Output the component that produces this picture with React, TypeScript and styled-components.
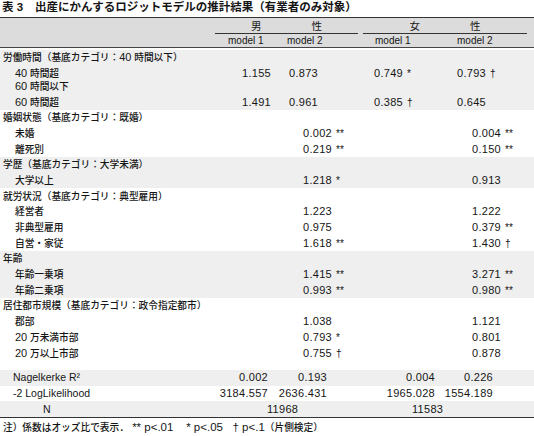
import { FunctionComponent, ReactNode } from "react";
import styled, { createGlobalStyle } from "styled-components";

const GlobalStyle = createGlobalStyle`
    body {
        margin: 0;
        background: #fff;
        color: #151515;
        font-family: "Liberation Sans", "Noto Sans CJK JP", sans-serif;
    }
`;

const COLS = "215px 63px 82px 83px 91px";

interface Mark {
    v: string;
    m?: string;
}

interface Item {
    label: string[];
    m1?: string;
    m2?: Mark;
    f1?: Mark;
    f2?: Mark;
}

interface Section {
    title: string;
    shaded: boolean;
    m2Pad: number;
    f2Pad: number;
    items: Item[];
}

const sections: Section[] = [
    {
        title: "労働時間（基底カテゴリ：40 時間以下）",
        shaded: true,
        m2Pad: 11,
        f2Pad: 14,
        items: [
            { label: ["40 時間超", "60 時間以下"], m1: "1.155", m2: { v: "0.873" }, f1: { v: "0.749", m: "*" }, f2: { v: "0.793", m: "†" } },
            { label: ["60 時間超"], m1: "1.491", m2: { v: "0.961" }, f1: { v: "0.385", m: "†" }, f2: { v: "0.645" } },
        ],
    },
    {
        title: "婚姻状態（基底カテゴリ：既婚）",
        shaded: false,
        m2Pad: 25,
        f2Pad: 29,
        items: [
            { label: ["未婚"], m2: { v: "0.002", m: "**" }, f2: { v: "0.004", m: "**" } },
            { label: ["離死別"], m2: { v: "0.219", m: "**" }, f2: { v: "0.150", m: "**" } },
        ],
    },
    {
        title: "学歴（基底カテゴリ：大学未満）",
        shaded: true,
        m2Pad: 25,
        f2Pad: 29,
        items: [
            { label: ["大学以上"], m2: { v: "1.218", m: "*" }, f2: { v: "0.913" } },
        ],
    },
    {
        title: "就労状況（基底カテゴリ：典型雇用）",
        shaded: false,
        m2Pad: 25,
        f2Pad: 29,
        items: [
            { label: ["経営者"], m2: { v: "1.223" }, f2: { v: "1.222" } },
            { label: ["非典型雇用"], m2: { v: "0.975" }, f2: { v: "0.379", m: "**" } },
            { label: ["自営・家従"], m2: { v: "1.618", m: "**" }, f2: { v: "1.430", m: "†" } },
        ],
    },
    {
        title: "年齢",
        shaded: true,
        m2Pad: 25,
        f2Pad: 29,
        items: [
            { label: ["年齢一乗項"], m2: { v: "1.415", m: "**" }, f2: { v: "3.271", m: "**" } },
            { label: ["年齢二乗項"], m2: { v: "0.993", m: "**" }, f2: { v: "0.980", m: "**" } },
        ],
    },
    {
        title: "居住都市規模（基底カテゴリ：政令指定都市）",
        shaded: false,
        m2Pad: 25,
        f2Pad: 29,
        items: [
            { label: ["郡部"], m2: { v: "1.038" }, f2: { v: "1.121" } },
            { label: ["20 万未満市部"], m2: { v: "0.793", m: "*" }, f2: { v: "0.801" } },
            { label: ["20 万以上市部"], m2: { v: "0.755", m: "†" }, f2: { v: "0.878" } },
        ],
    },
];

const stats = [
    { label: "Nagelkerke R²", values: ["0.002", "0.193", "0.004", "0.226"], shaded: true },
    { label: "-2 LogLikelihood", values: ["3184.557", "2636.431", "1965.028", "1554.189"], shaded: false },
];

// right padding of each stat column, so numbers end where the print has them
const statPads = [10, 33, 8, 41];

const Page = styled.main`
    width: 534px;
`;

const Title = styled.h1`
    margin: 0;
    height: 17px;
    padding-left: 2px;
    font-size: 11.5px;
    line-height: 15px;
    font-weight: bold;
    white-space: nowrap;
`;

const TitleNo = styled.span`
    margin-right: 12px;
`;

const Table = styled.section`
    border-top: 1.5px solid #333;
    border-bottom: 1.5px solid #333;
`;

const Head = styled.header`
    background: #dcdcdc;
    border-bottom: 1px solid #444;
    margin-bottom: 2px;
`;

const HeadRow = styled.div<{ $h: number }>`
    display: grid;
    grid-template-columns: ${COLS};
    height: ${(p) => p.$h}px;
`;

const Group = styled.div<{ $left: number; $right: number }>`
    grid-column: span 2;
    display: flex;
    justify-content: center;
    align-items: center;
    gap: 50px;
    margin: 0 ${(p) => p.$right}px 0 ${(p) => p.$left}px;
    border-bottom: 1px solid #333;
    font-size: 10.5px;
`;

const ModelName = styled.div<{ $pad: number }>`
    display: flex;
    align-items: center;
    padding-left: ${(p) => p.$pad}px;
    font-size: 10px;
`;

const Block = styled.div<{ $shaded: boolean }>`
    background: ${(p) => (p.$shaded ? "#efefef" : "transparent")};
`;

const Row = styled.div<{ $tall?: boolean; $shaded?: boolean }>`
    display: grid;
    grid-template-columns: ${COLS};
    height: ${(p) => (p.$tall ? "29px" : "15.7px")};
    align-items: ${(p) => (p.$tall ? "start" : "center")};
    padding-top: ${(p) => (p.$tall ? "1.5px" : "0")};
    box-sizing: border-box;
    line-height: 13px;
    background: ${(p) => (p.$shaded ? "#efefef" : "transparent")};
`;

const Label = styled.div<{ $indent: number }>`
    padding-left: ${(p) => p.$indent}px;
    font-size: 9.7px;
    font-weight: 500;
    white-space: nowrap;
`;

// latin figures inside Japanese text run a size larger in the print
const Lat = styled.span<{ $size?: number }>`
    font-size: ${(p) => p.$size ?? 11}px;
    font-weight: 400;
`;

const StatLabel = styled.div<{ $indent: number }>`
    padding-left: ${(p) => p.$indent}px;
    font-size: 10.5px;
    white-space: nowrap;
`;

const Value = styled.div<{ $align?: "left" | "right"; $pad?: number; $span?: number }>`
    grid-column: span ${(p) => p.$span ?? 1};
    text-align: ${(p) => p.$align ?? "left"};
    ${(p) => (p.$align === "right" ? "padding-right" : "padding-left")}: ${(p) => p.$pad ?? 0}px;
    font-size: 11px;
    letter-spacing: 0.3px;
    white-space: nowrap;
`;

const Sig = styled.span`
    margin-left: 4px;
    font-size: 10px;
    letter-spacing: 0;
`;

const Spacer = styled.div`
    height: 9px;
`;

const Note = styled.p`
    margin: 0;
    padding: 3px 0 0 3px;
    font-size: 9.7px;
    font-weight: 500;
    line-height: 13px;
    white-space: pre;
`;

const withFigures = (text: string): ReactNode =>
    text.split(/(\d+)/).map((part, i) => (/^\d+$/.test(part) ? <Lat key={i}>{part}</Lat> : part));

const Num: FunctionComponent<{ cell?: Mark; pad: number }> = ({ cell, pad }) => (
    <Value $pad={pad}>
        {cell && cell.v}
        {cell && cell.m && <Sig>{cell.m}</Sig>}
    </Value>
);

const App: FunctionComponent = () => {
    return (
        <Page>
            <GlobalStyle />
            <Title>
                <TitleNo>表 3</TitleNo>出産にかんするロジットモデルの推計結果（有業者のみ対象）
            </Title>
            <Table>
                <Head>
                    <HeadRow $h={16}>
                        <div />
                        <Group $left={0} $right={2}>
                            <span>男</span>
                            <span>性</span>
                        </Group>
                        <Group $left={3} $right={7}>
                            <span>女</span>
                            <span>性</span>
                        </Group>
                    </HeadRow>
                    <HeadRow $h={12.5}>
                        <div />
                        <ModelName $pad={13}>model 1</ModelName>
                        <ModelName $pad={9}>model 2</ModelName>
                        <ModelName $pad={15}>model 1</ModelName>
                        <ModelName $pad={14}>model 2</ModelName>
                    </HeadRow>
                </Head>

                {sections.map((s) => (
                    <Block key={s.title} $shaded={s.shaded}>
                        <Row>
                            <Label $indent={3}>{withFigures(s.title)}</Label>
                        </Row>
                        {s.items.map((it, i) => (
                            <Row key={i} $tall={it.label.length > 1}>
                                <Label $indent={15}>
                                    {it.label.map((line, j) => (
                                        <div key={j}>{withFigures(line)}</div>
                                    ))}
                                </Label>
                                <Value $align="right" $pad={7}>{it.m1}</Value>
                                <Num cell={it.m2} pad={s.m2Pad} />
                                <Num cell={it.f1} pad={14} />
                                <Num cell={it.f2} pad={s.f2Pad} />
                            </Row>
                        ))}
                    </Block>
                ))}

                <Spacer />

                {stats.map((st, i) => (
                    <Row key={i} $shaded={st.shaded}>
                        <StatLabel $indent={13}>{st.label}</StatLabel>
                        {st.values.map((v, j) => (
                            <Value key={j} $align="right" $pad={statPads[j]}>{v}</Value>
                        ))}
                    </Row>
                ))}
                <Row $shaded>
                    <StatLabel $indent={43}>N</StatLabel>
                    <Value $span={2} $pad={52}>11968</Value>
                    <Value $span={2} $pad={52}>11583</Value>
                </Row>
            </Table>
            <Note>
                注）係数はオッズ比で表示．<Lat $size={11.5}>{" ** p<.01    * p<.05   † p<.1"}</Lat>（片側検定）
            </Note>
        </Page>
    );
};

export default App;
